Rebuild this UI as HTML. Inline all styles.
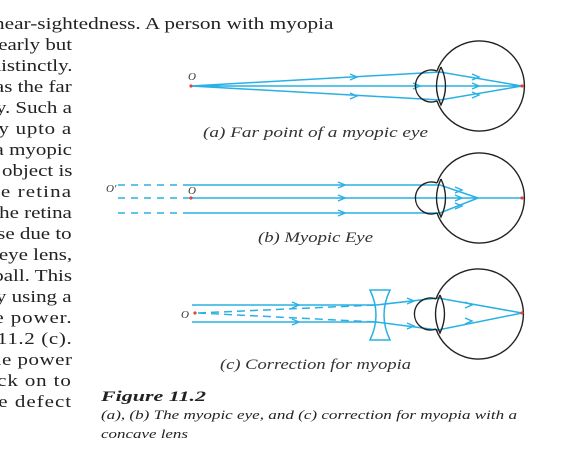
<!DOCTYPE html>
<html><head><meta charset="utf-8"><style>
html,body{margin:0;padding:0;background:#fff;width:563px;height:454px;overflow:hidden;position:relative}
.t{position:absolute;right:491px;font-family:"Liberation Serif",serif;font-size:16.5px;color:#222;white-space:nowrap;text-align:right;transform:scaleX(1.27);transform-origin:100% 50%}
svg{position:absolute;left:0;top:0}
</style></head><body>
<div style="position:absolute;left:-6px;top:14px;font-family:'Liberation Serif',serif;font-size:16.5px;color:#222;white-space:nowrap;transform:scaleX(1.29);transform-origin:0 50%">near-sightedness. A person with myopia</div>
<div class="t" style="top:35px">clearly but</div>
<div class="t" style="top:56px">distinctly.</div>
<div class="t" style="top:77px">has the far</div>
<div class="t" style="top:98px">y. Such a</div>
<div class="t" style="top:119px;letter-spacing:0.6px">y upto a</div>
<div class="t" style="top:140px">a myopic</div>
<div class="t" style="top:161px">object is</div>
<div class="t" style="top:182px;letter-spacing:0.9px">e retina</div>
<div class="t" style="top:203px">the retina</div>
<div class="t" style="top:224px">se due to</div>
<div class="t" style="top:245px">e eye lens,</div>
<div class="t" style="top:266px">ball. This</div>
<div class="t" style="top:287px">y using a</div>
<div class="t" style="top:308px;letter-spacing:0.7px">e power.</div>
<div class="t" style="top:329px;letter-spacing:0.5px">11.2 (c).</div>
<div class="t" style="top:350px;letter-spacing:0.4px">le power</div>
<div class="t" style="top:371px;letter-spacing:0.7px">ck on to</div>
<div class="t" style="top:392px;letter-spacing:0.8px">e defect</div>

<svg width="563" height="454" viewBox="0 0 563 454">
<defs>
<g id="eye" fill="none" stroke="#222" stroke-width="1.4">
<path d="M-42 -15 A45 45 0 1 1 -42 15"/>
<path d="M-42 -15 A16 16 0 1 0 -42 15"/>
<path d="M-38 -19 Q-47 0 -38 19 Q-29 0 -38 -19"/>
</g>
</defs>
<g stroke="#29b0e4" stroke-width="1.5" fill="none">
<path d="M191 86 L440 72 L522 86 M191 86 L522 86 M191 86 L440 100 L522 86"/>
<path d="M183 185 L440 185 L478 198 M183 198 L522 198 M183 213 L440 213 L478 198"/>
<path d="M118 185 H183 M118 198 H183 M118 213 H183" stroke-dasharray="7 6"/>
<path d="M192 305 L376 305 L438 298 L522 313 M192 322 L376 322 L438 330 L522 313"/>
<path d="M198 313 L376 305 M198 313 L376 322" stroke-dasharray="8 5"/>
<path d="M370 290 H390 Q378 315 390 340 H370 Q382 315 370 290 Z"/>
</g>
<g stroke="#29b0e4" stroke-width="1.4" fill="none">
<path d="M350 74 L357 77 L350 80 M350 93 L357 96 L350 99 M413 83 L420 86 L413 89 M472 74 L479 77 L472 80 M472 92 L479 95 L472 98 M472 83 L479 86 L472 89"/>
<path d="M338 182 L345 185 L338 188 M338 195 L345 198 L338 201 M338 210 L345 213 L338 216 M455 187 L462 190 L455 193 M455 195 L462 198 L455 201 M455 203 L462 206 L455 209"/>
<path d="M292 302 L299 305 L292 308 M292 319 L299 322 L292 325 M407 298 L414 301 L407 304 M407 323 L414 326 L407 329 M465 302 L472 305 L465 308 M465 318 L472 321 L465 324"/>
</g>
<use href="#eye" x="479" y="86"/>
<use href="#eye" x="479" y="198"/>
<use href="#eye" x="478" y="314"/>
<g fill="#e0453a"><circle cx="191" cy="86" r="1.6"/><circle cx="522" cy="86" r="1.6"/><circle cx="191" cy="198" r="1.6"/><circle cx="522" cy="198" r="1.6"/><circle cx="195" cy="313" r="1.6"/><circle cx="522" cy="313" r="1.6"/></g>
<g font-family="Liberation Serif,serif" font-style="italic" fill="#333">
<text x="188" y="80" font-size="11">O</text>
<text x="106" y="192" font-size="11">O'</text>
<text x="188" y="194" font-size="11">O</text>
<text x="181" y="318" font-size="11">O</text>
<text x="203" y="137" font-size="15" textLength="225" lengthAdjust="spacingAndGlyphs">(a) Far point of a myopic eye</text>
<text x="258" y="242" font-size="15" textLength="115" lengthAdjust="spacingAndGlyphs">(b) Myopic Eye</text>
<text x="220" y="369" font-size="15" textLength="191" lengthAdjust="spacingAndGlyphs">(c) Correction for myopia</text>
<text x="101" y="401" font-size="14.5" font-weight="bold" fill="#222" textLength="105" lengthAdjust="spacingAndGlyphs">Figure 11.2</text>
<text x="101" y="419" font-size="13" fill="#222" textLength="416" lengthAdjust="spacingAndGlyphs">(a), (b) The myopic eye, and (c) correction for myopia with a</text>
<text x="101" y="438" font-size="13" fill="#222" textLength="87" lengthAdjust="spacingAndGlyphs">concave lens</text>
</g>
</svg>
</body></html>
